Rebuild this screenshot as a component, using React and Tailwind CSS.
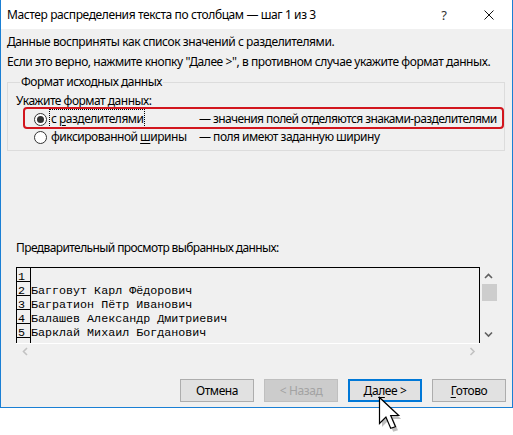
import React from "react";

const rows = [
  { n: "1", text: "" },
  { n: "2", text: "Багговут Карл Фёдорович" },
  { n: "3", text: "Багратион Пётр Иванович" },
  { n: "4", text: "Балашев Александр Дмитриевич" },
  { n: "5", text: "Барклай Михаил Богданович" },
  { n: "", text: "" },
];

function Chevron({ dir, color = "#606060" }) {
  const paths = {
    up: "M1 5 L4.5 1.5 L8 5",
    down: "M1 1.5 L4.5 5 L8 1.5",
    left: "M5 1 L1.5 4.5 L5 8",
    right: "M1.5 1 L5 4.5 L1.5 8",
  };
  const vertical = dir === "up" || dir === "down";
  return (
    <svg
      width={vertical ? 9 : 7}
      height={vertical ? 7 : 9}
      viewBox={vertical ? "0 0 9 7" : "0 0 7 9"}
      fill="none"
      stroke={color}
      strokeWidth="1.6"
    >
      <path d={paths[dir]} />
    </svg>
  );
}

function Radio({ checked }) {
  return (
    <span className="w-[13px] h-[13px] rounded-full border border-[#333333] bg-white flex items-center justify-center shrink-0">
      {checked && <span className="w-[7px] h-[7px] rounded-full bg-[#333333]" />}
    </span>
  );
}

function Button({ children, variant }) {
  const styles = {
    normal: "border border-[#adadad] bg-[#e1e1e1] text-black",
    disabled: "border border-[#bfbfbf] bg-[#cccccc] text-[#a3a3a3]",
    default: "border-2 border-[#0078d7] bg-[#e1e1e1] text-black",
  };
  return (
    <div
      className={`w-[74px] h-[23px] flex items-center justify-center text-[12px] tracking-[-0.4px] ${styles[variant]}`}
    >
      {children}
    </div>
  );
}

export default function App() {
  return (
    <div className="w-[513px] h-[435px] bg-white relative overflow-hidden font-['Noto_Sans',sans-serif] text-black">
      {/* Window */}
      <div className="w-[513px] h-[408px] border-x border-b border-[#1a7fd4] bg-[#f0f0f0] flex flex-col">
        {/* Title bar */}
        <div className="h-[29px] bg-white flex items-center shrink-0">
          <span className="pl-[6px] text-[12px] leading-[16px] tracking-[-0.4px] whitespace-nowrap">
            Мастер распределения текста по столбцам — шаг 1 из 3
          </span>
          <span className="ml-auto w-[46px] pl-[2px] text-center text-[13px] leading-[16px] text-[#333]">
            ?
          </span>
          <span className="w-[46px] flex justify-center">
            <svg width="10" height="10" viewBox="0 0 10 10" stroke="#111" strokeWidth="1">
              <path d="M0.5 0.5 L9.5 9.5 M9.5 0.5 L0.5 9.5" />
            </svg>
          </span>
        </div>

        {/* Body */}
        <div className="flex flex-col pt-[5px] text-[12px] leading-[16px] tracking-[-0.5px] whitespace-nowrap">
          <p className="pl-[6px] tracking-[-0.43px]">
            Данные восприняты как список значений с разделителями.
          </p>
          <p className="pl-[6px] mt-[4px] tracking-[-0.43px]">
            Если это верно, нажмите кнопку ''Далее &gt;'', в противном случае укажите формат данных.
          </p>

          <fieldset className="mt-[4px] ml-[6px] w-[498px] border border-[#dcdcdc] pl-[8px] pb-[5px]">
            <legend className="ml-[4px] px-[1px]">Формат исходных данных</legend>
            <p className="mt-[3px]">Укажите формат данных:</p>
            <div className="mt-[2px] flex items-center ml-[18px]">
              <Radio checked />
              <div className="w-[150px] ml-[2px]">
                <span className="border border-dotted border-black pl-[1px] pr-[1px]">
                  с <span className="underline underline-offset-2">р</span>азделителями
                </span>
              </div>
              <span className="tracking-[-0.6px]">— значения полей отделяются знаками-разделителями</span>
            </div>
            <div className="mt-[2px] flex items-center ml-[18px]">
              <Radio />
              <div className="w-[150px] ml-[2px]">
                <span className="border border-transparent pl-[1px]">
                  фиксированной <span className="underline underline-offset-2">ш</span>ирины
                </span>
              </div>
              <span>— поля имеют заданную ширину</span>
            </div>
          </fieldset>

          <p className="mt-[89px] pl-[15px] tracking-[-0.6px]">
            Предварительный просмотр выбранных данных:
          </p>

          {/* Preview */}
          <div className="mt-[11px] ml-[15px] flex">
            <div className="w-[464px] flex flex-col">
              <div className="h-[76px] border-t border-r border-black overflow-hidden font-['Liberation_Mono',monospace] text-[11.7px] leading-[13px] tracking-normal">
                {rows.map((r, i) => (
                  <div key={i} className="flex h-[14px]">
                    <div className="w-[15px] h-[14px] border-x border-b border-black pl-[1px] pt-[3px] shrink-0">
                      {r.n}
                    </div>
                    <div className="whitespace-pre pt-[3px]">{r.text}</div>
                  </div>
                ))}
              </div>
              <div className="h-px bg-white" />
              <div className="h-[15px] flex items-center justify-between pl-[6px] pr-[4px]">
                <Chevron dir="left" color="#c2c2c2" />
                <Chevron dir="right" color="#c2c2c2" />
              </div>
            </div>
            <div className="w-[17px] h-[76px] flex flex-col items-center">
              <div className="h-[17px] flex items-center pt-[2px]">
                <Chevron dir="up" />
              </div>
              <div className="w-[15px] h-[17px] bg-[#cdcdcd] ml-[1px]" />
              <div className="mt-auto h-[17px] flex items-center">
                <Chevron dir="down" />
              </div>
            </div>
          </div>

          {/* Buttons */}
          <div className="mt-[20px] flex justify-end gap-[10px] pr-[6px]">
            <Button variant="normal">Отмена</Button>
            <Button variant="disabled">&lt; Назад</Button>
            <Button variant="default">
              <span>
                Да<span className="underline underline-offset-2">л</span>ее &gt;
              </span>
            </Button>
            <Button variant="normal">
              <span>
                <span className="underline underline-offset-2">Г</span>отово
              </span>
            </Button>
          </div>
        </div>
      </div>

      {/* Red highlight */}
      <div className="absolute left-[23px] top-[107px] w-[481px] h-[22px] border-2 border-[#d2161e] rounded-[4px]" />

      {/* Mouse cursor */}
      <svg
        className="absolute left-[378px] top-[396px]"
        width="24"
        height="36"
        viewBox="0 0 24 36"
      >
        <path
          d="M2.5 3.5 L2.5 29.5 L8.9 23.1 L13.7 34.3 L18.5 32.7 L13.7 21.5 L21.7 21.5 Z"
          fill="#000"
          opacity="0.25"
          transform="translate(1.5 1.5)"
        />
        <path
          d="M1.5 1.5 L1.5 27.5 L7.9 21.1 L12.7 32.3 L17.5 30.7 L12.7 19.5 L20.7 19.5 Z"
          fill="#fff"
          stroke="#000"
          strokeWidth="1.2"
          strokeLinejoin="miter"
        />
      </svg>
    </div>
  );
}
